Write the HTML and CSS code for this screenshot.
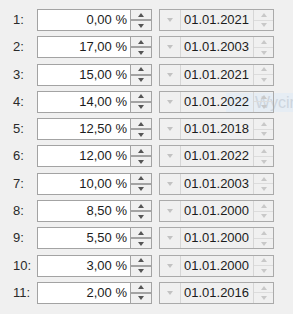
FILE: index.html
```html
<html>
	<head>
		<meta charset="UTF-8" />
		<title>Rates</title>
		<link rel="stylesheet" href="styles.css">
	</head>
	<body>
		<div class="list">
			<div class="row"><span class="num">1:</span><div class="edit">0,00 %</div><div class="spin"><span class="up"></span><span class="down"></span></div><div class="date"><span class="drop"></span><span class="val">01.01.2021</span><div class="spin off"><span class="up"></span><span class="down"></span></div></div></div>
			<div class="row"><span class="num">2:</span><div class="edit">17,00 %</div><div class="spin"><span class="up"></span><span class="down"></span></div><div class="date"><span class="drop"></span><span class="val">01.01.2003</span><div class="spin off"><span class="up"></span><span class="down"></span></div></div></div>
			<div class="row"><span class="num">3:</span><div class="edit">15,00 %</div><div class="spin"><span class="up"></span><span class="down"></span></div><div class="date"><span class="drop"></span><span class="val">01.01.2021</span><div class="spin off"><span class="up"></span><span class="down"></span></div></div></div>
			<div class="row"><span class="num">4:</span><div class="edit">14,00 %</div><div class="spin"><span class="up"></span><span class="down"></span></div><div class="date"><span class="drop"></span><span class="val">01.01.2022</span><div class="spin off"><span class="up"></span><span class="down"></span></div></div></div>
			<div class="row"><span class="num">5:</span><div class="edit">12,50 %</div><div class="spin"><span class="up"></span><span class="down"></span></div><div class="date"><span class="drop"></span><span class="val">01.01.2018</span><div class="spin off"><span class="up"></span><span class="down"></span></div></div></div>
			<div class="row"><span class="num">6:</span><div class="edit">12,00 %</div><div class="spin"><span class="up"></span><span class="down"></span></div><div class="date"><span class="drop"></span><span class="val">01.01.2022</span><div class="spin off"><span class="up"></span><span class="down"></span></div></div></div>
			<div class="row"><span class="num">7:</span><div class="edit">10,00 %</div><div class="spin"><span class="up"></span><span class="down"></span></div><div class="date"><span class="drop"></span><span class="val">01.01.2003</span><div class="spin off"><span class="up"></span><span class="down"></span></div></div></div>
			<div class="row"><span class="num">8:</span><div class="edit">8,50 %</div><div class="spin"><span class="up"></span><span class="down"></span></div><div class="date"><span class="drop"></span><span class="val">01.01.2000</span><div class="spin off"><span class="up"></span><span class="down"></span></div></div></div>
			<div class="row"><span class="num">9:</span><div class="edit">5,50 %</div><div class="spin"><span class="up"></span><span class="down"></span></div><div class="date"><span class="drop"></span><span class="val">01.01.2000</span><div class="spin off"><span class="up"></span><span class="down"></span></div></div></div>
			<div class="row"><span class="num">10:</span><div class="edit">3,00 %</div><div class="spin"><span class="up"></span><span class="down"></span></div><div class="date"><span class="drop"></span><span class="val">01.01.2000</span><div class="spin off"><span class="up"></span><span class="down"></span></div></div></div>
			<div class="row"><span class="num">11:</span><div class="edit">2,00 %</div><div class="spin"><span class="up"></span><span class="down"></span></div><div class="date"><span class="drop"></span><span class="val">01.01.2016</span><div class="spin off"><span class="up"></span><span class="down"></span></div></div></div>
		</div>
		<div class="ghost"><span>Wycin</span></div>
	</body>
</html>
```

FILE: styles.css
```css
html { background: #f0f0f0; }
body { margin: 0; font: 13px "Liberation Sans", Arial, sans-serif; color: #1c1c1c; overflow: hidden; }
.list { display: flex; flex-direction: column; gap: 5.3px; padding: 9px 0 0 13px; }
.row { display: flex; height: 22px; }
.num { width: 24px; line-height: 22px; color: #2a2a2a; }
.edit { box-sizing: border-box; width: 94px; border: 1px solid #a3a3a3; background: #fff;
	text-align: right; padding-right: 3px; line-height: 20px; }
.spin { box-sizing: border-box; width: 21px; display: flex; flex-direction: column;
	border: 1px solid #a3a3a3; border-left: none; }
.spin span { flex: 1; display: flex; align-items: center; justify-content: center; }
.spin .up { border-bottom: 1px solid #a3a3a3; }
.spin .down { border-top: 1px solid #a3a3a3; }
.spin .up::before { content: ""; border: 3.5px solid transparent; border-top: 0;
	border-bottom: 4px solid #555; }
.spin .down::before { content: ""; border: 3.5px solid transparent; border-bottom: 0;
	border-top: 4px solid #555; }
.date { box-sizing: border-box; width: 115px; margin-left: 7px; display: flex; border: 1px solid #aaa; }
.drop { width: 20px; border-right: 1px solid #d6d6d6; display: flex; align-items: center; justify-content: center; }
.drop::before { content: ""; border: 3.5px solid transparent; border-bottom: 0; border-top: 4px solid #c2c2c2; }
.val { flex: 1; padding-left: 3px; line-height: 20px; }
.spin.off { width: 20px; border: none; border-left: 1px solid #d6d6d6; }
.spin.off .up { border-bottom: 1px solid #dcdcdc; }
.spin.off .down { border-top: none; }
.spin.off .up::before { border-bottom-color: #c8c8c8; }
.spin.off .down::before { border-top-color: #c8c8c8; }
.ghost { position: absolute; z-index: -1; left: 226px; top: 93px; width: 67px; height: 19px; padding-left: 29px;
	box-sizing: border-box; background: #e6edf4; color: #cdd5de;
	font-size: 16px; line-height: 19px; white-space: nowrap; overflow: hidden; }
```
